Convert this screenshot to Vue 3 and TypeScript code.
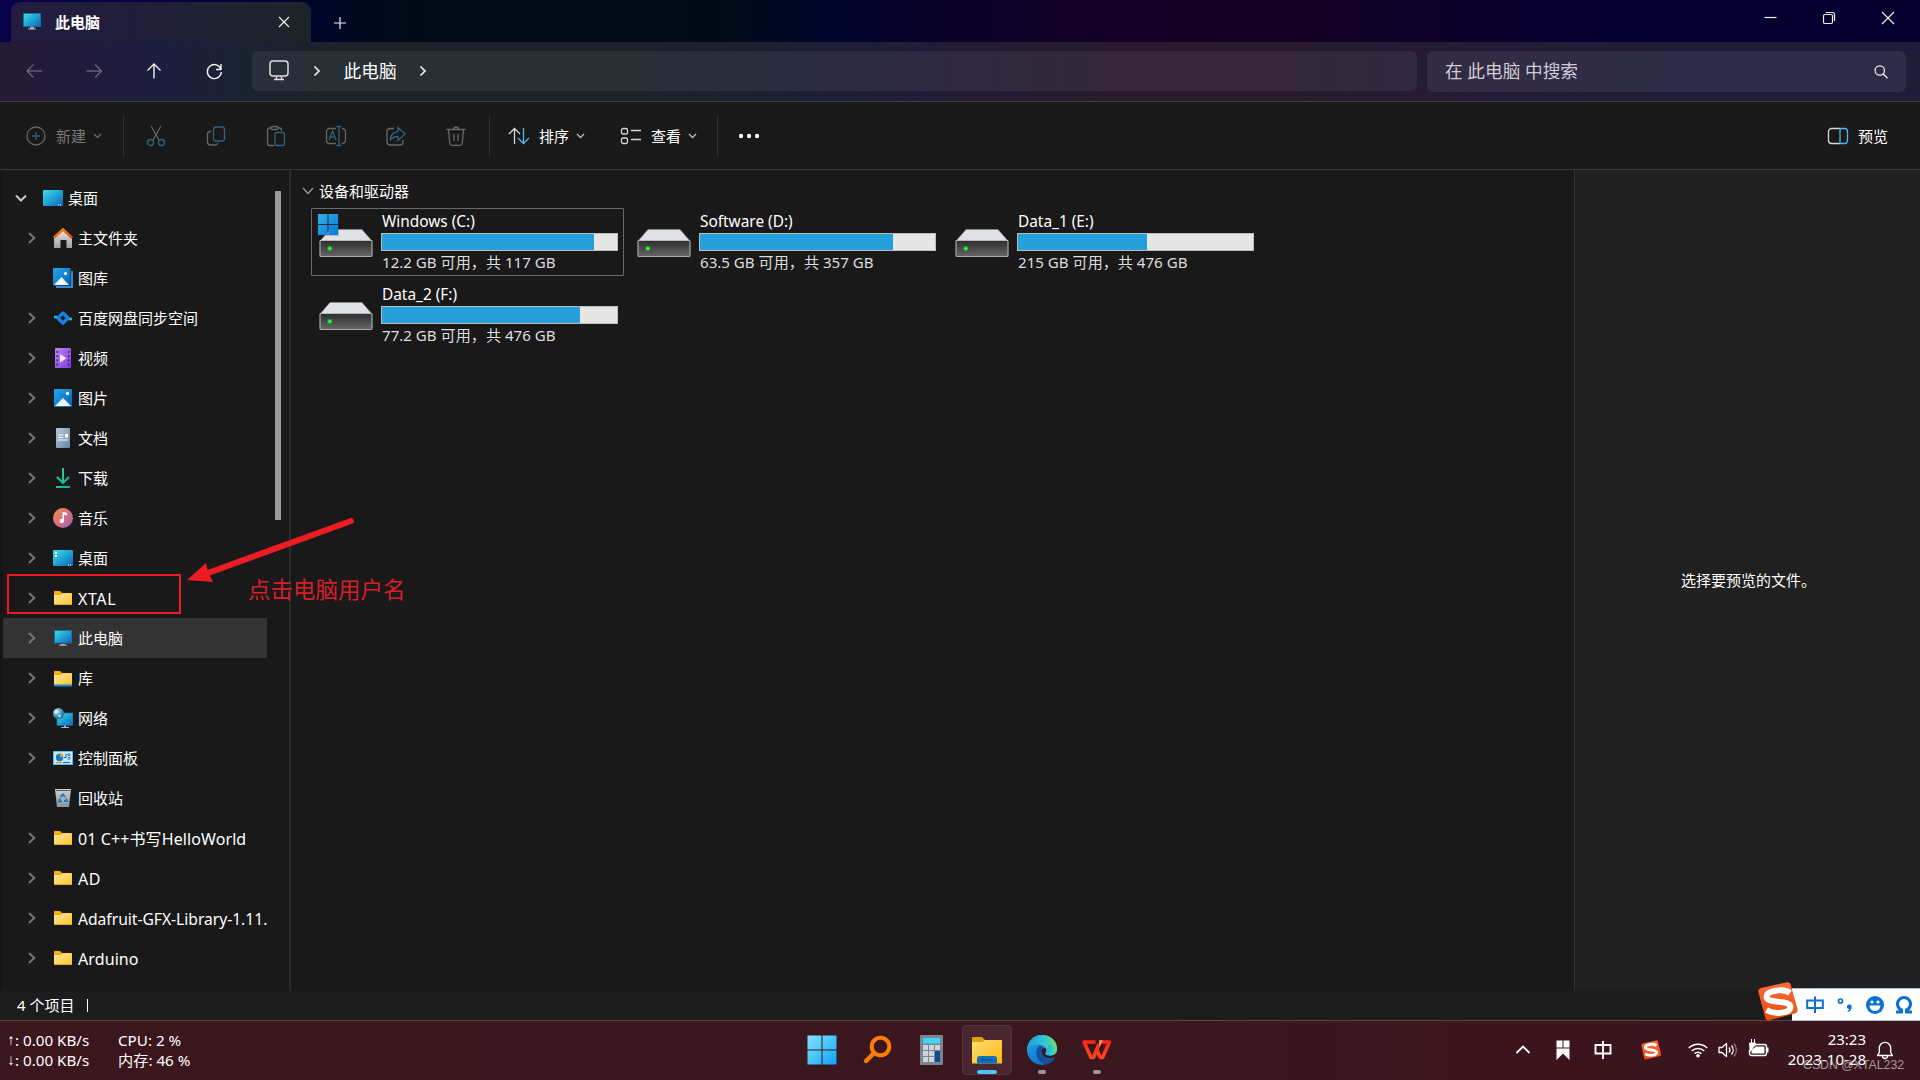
<script setup lang="ts">
type IconKind =
  | 'desktop' | 'home' | 'gallery' | 'baidu' | 'video' | 'picture' | 'document' | 'download'
  | 'music' | 'desktop2' | 'folder' | 'pc' | 'library' | 'network' | 'control' | 'recycle'

interface TreeNode { label: string; icon: IconKind; expandable?: boolean; root?: boolean; selected?: boolean; latin?: 'wide' | 'normal' | 'tight' }
interface Drive { name: string; detail: string; used: number; system?: boolean; focused?: boolean }

const tree: TreeNode[] = [
  { label: '桌面', icon: 'desktop', root: true },
  { label: '主文件夹', icon: 'home', expandable: true },
  { label: '图库', icon: 'gallery' },
  { label: '百度网盘同步空间', icon: 'baidu', expandable: true },
  { label: '视频', icon: 'video', expandable: true },
  { label: '图片', icon: 'picture', expandable: true },
  { label: '文档', icon: 'document', expandable: true },
  { label: '下载', icon: 'download', expandable: true },
  { label: '音乐', icon: 'music', expandable: true },
  { label: '桌面', icon: 'desktop2', expandable: true },
  { label: 'XTAL', icon: 'folder', expandable: true, latin: 'wide' },
  { label: '此电脑', icon: 'pc', expandable: true, selected: true },
  { label: '库', icon: 'library', expandable: true },
  { label: '网络', icon: 'network', expandable: true },
  { label: '控制面板', icon: 'control', expandable: true },
  { label: '回收站', icon: 'recycle' },
  { label: '01 C++书写HelloWorld', icon: 'folder', expandable: true, latin: 'normal' },
  { label: 'AD', icon: 'folder', expandable: true, latin: 'wide' },
  { label: 'Adafruit-GFX-Library-1.11.', icon: 'folder', expandable: true, latin: 'tight' },
  { label: 'Arduino', icon: 'folder', expandable: true, latin: 'normal' },
]

const drives: Drive[] = [
  { name: 'Windows (C:)', detail: '12.2 GB 可用，共 117 GB', used: 90.2, system: true, focused: true },
  { name: 'Software (D:)', detail: '63.5 GB 可用，共 357 GB', used: 82.3 },
  { name: 'Data_1 (E:)', detail: '215 GB 可用，共 476 GB', used: 54.9 },
  { name: 'Data_2 (F:)', detail: '77.2 GB 可用，共 476 GB', used: 84.2 },
]
</script>

<template>
  <div class="screen">
    <svg class="defs" width="0" height="0">
      <defs>
        <linearGradient id="gCyan" x1="0" y1="0" x2="1" y2="1"><stop offset="0" stop-color="#3be0e6" /><stop offset=".5" stop-color="#1fa3d4" /><stop offset="1" stop-color="#0c62bd" /></linearGradient>
        <linearGradient id="gBlue" x1="0" y1="0" x2="1" y2="1"><stop offset="0" stop-color="#25a6ea" /><stop offset="1" stop-color="#0560b4" /></linearGradient>
        <linearGradient id="gFolder" x1="0" y1="0" x2="1" y2="1"><stop offset="0" stop-color="#ffe9a0" /><stop offset="1" stop-color="#fcc42c" /></linearGradient>
        <linearGradient id="gRoof" x1="0" y1="0" x2="1" y2="1"><stop offset="0" stop-color="#f7930e" /><stop offset="1" stop-color="#d9400c" /></linearGradient>
        <linearGradient id="gGrey" x1="0" y1="0" x2="0" y2="1"><stop offset="0" stop-color="#e6e6e6" /><stop offset="1" stop-color="#9e9e9e" /></linearGradient>
        <linearGradient id="gBin" x1="0" y1="0" x2="0" y2="1"><stop offset="0" stop-color="#cdd0d3" /><stop offset="1" stop-color="#8f9397" /></linearGradient>
        <linearGradient id="gPurple" x1="0" y1="0" x2="1" y2="1"><stop offset="0" stop-color="#c384f5" /><stop offset="1" stop-color="#7c3ae0" /></linearGradient>
        <linearGradient id="gDoc" x1="0" y1="0" x2="1" y2="1"><stop offset="0" stop-color="#b5c8dc" /><stop offset="1" stop-color="#6685a4" /></linearGradient>
        <linearGradient id="gGreen" x1="0" y1="0" x2="1" y2="1"><stop offset="0" stop-color="#35cf80" /><stop offset="1" stop-color="#0aa1a4" /></linearGradient>
        <linearGradient id="gMusic" x1="0" y1="0" x2="1" y2="1"><stop offset="0" stop-color="#f28b4e" /><stop offset=".5" stop-color="#d9727b" /><stop offset="1" stop-color="#8e5cc0" /></linearGradient>
        <linearGradient id="gDrive" x1="0" y1="0" x2="0" y2="1"><stop offset="0" stop-color="#2d2d2d" /><stop offset="1" stop-color="#666" /></linearGradient>
        <linearGradient id="gWin" x1="0" y1="0" x2="1" y2="1"><stop offset="0" stop-color="#2fb0ea" /><stop offset="1" stop-color="#067bd6" /></linearGradient>
        <linearGradient id="gStart" x1="0" y1="0" x2="1" y2="1"><stop offset="0" stop-color="#8be0ff" /><stop offset=".5" stop-color="#45c6fb" /><stop offset="1" stop-color="#119dfb" /></linearGradient>
        <linearGradient id="gTaskFolder" x1="0" y1="0" x2="1" y2="1"><stop offset="0" stop-color="#ffdc73" /><stop offset="1" stop-color="#fbb912" /></linearGradient>
        <linearGradient id="gEdgeTop" x1="0" y1=".3" x2="1" y2=".5"><stop offset="0" stop-color="#1b9ee6" /><stop offset=".5" stop-color="#31c2d8" /><stop offset="1" stop-color="#6ae25c" /></linearGradient>
        <linearGradient id="gEdgeLeft" x1="0" y1="0" x2=".7" y2="1"><stop offset="0" stop-color="#2ba6ea" /><stop offset="1" stop-color="#0869c8" /></linearGradient>
        <linearGradient id="gSogou" x1="0" y1="0" x2="0" y2="1"><stop offset="0" stop-color="#fa6b3b" /><stop offset="1" stop-color="#ec4a10" /></linearGradient>
        <linearGradient id="gWps" gradientUnits="userSpaceOnUse" x1="0" y1="5" x2="0" y2="25"><stop offset="0" stop-color="#ff2317" /><stop offset="1" stop-color="#ff4a20" /></linearGradient>
        <radialGradient id="gGlobe" cx=".35" cy=".3" r=".8"><stop offset="0" stop-color="#c5eaf8" /><stop offset=".5" stop-color="#4b9cc6" /><stop offset="1" stop-color="#1b547f" /></radialGradient>
      </defs>
    </svg>

    <header class="titlebar">
      <div class="tab">
        <svg class="tab-icon" width="20" height="20" viewBox="0 0 20 20"><rect x="2.500" y="1.500" width="17" height="13" fill="url(#gCyan)" stroke="#1c6f97" /><path d="M9 15h4v1.500H9zM7 16.500h8v1H7z" fill="#aab4b9" /></svg>
        <span class="tab-title">此电脑</span>
        <svg class="tab-close" width="12" height="12" viewBox="0 0 12 12"><path d="M1 1l10 10M11 1L1 11" /></svg>
      </div>
      <svg class="tab-add" width="14" height="14" viewBox="0 0 14 14"><path d="M7 1v12M1 7h12" /></svg>
      <div class="window-buttons">
        <svg width="14" height="14" viewBox="0 0 14 14"><path d="M1.500 6.500h12" /></svg>
        <svg width="14" height="14" viewBox="0 0 14 14"><rect x="1.500" y="3.500" width="9" height="9" rx="1.500" /><path d="M4 1.500h6.500a2 2 0 0 1 2 2V10" /></svg>
        <svg width="14" height="14" viewBox="0 0 14 14"><path d="M1 1l12 12M13 1L1 13" /></svg>
      </div>
    </header>

    <nav class="navbar">
      <svg class="nav-btn dim" width="20" height="20" viewBox="0 0 20 20"><path d="M18 10H3M9.500 3.500L3 10l6.500 6.500" /></svg>
      <svg class="nav-btn dim" width="20" height="20" viewBox="0 0 20 20"><path d="M2.500 10h15M11 3.500L17.500 10 11 16.500" /></svg>
      <svg class="nav-btn" width="20" height="20" viewBox="0 0 20 20"><path d="M10 17.500V3M3.500 9.500L10 3l6.500 6.500" /></svg>
      <svg class="nav-btn" width="20" height="20" viewBox="0 0 20 20"><path d="M17 8.500A7 7 0 1 0 17.300 11M17 3v5.500h-5" /></svg>
      <div class="address">
        <svg class="monitor" width="22" height="22" viewBox="0 0 22 22"><rect x="2" y="1" width="18" height="15" rx="3" /><path d="M8.500 16.500v3M13.500 16.500v3M6 19.500h10" /></svg>
        <svg class="crumb" width="8" height="12" viewBox="0 0 8 12"><path d="M1.500 1.500L6 6l-4.500 4.500" /></svg>
        <span class="crumb-text">此电脑</span>
        <svg class="crumb last" width="8" height="12" viewBox="0 0 8 12"><path d="M1.500 1.500L6 6l-4.500 4.500" /></svg>
      </div>
      <div class="search">
        <span>在 此电脑 中搜索</span>
        <svg width="16" height="16" viewBox="0 0 16 16"><circle cx="6.800" cy="6.500" r="4.700" /><path d="M10.200 10l4.300 4.300" /></svg>
      </div>
    </nav>

    <div class="toolbar">
      <div class="tool new">
        <svg width="20" height="20" viewBox="0 0 20 20"><circle cx="10" cy="10" r="9" /><path class="accent" d="M10 6v8M6 10h8" /></svg>
        <span>新建</span>
        <svg class="caret" width="9" height="6" viewBox="0 0 9 6"><path d="M1 1l3.500 3.500L8 1" /></svg>
      </div>
      <i class="sep"></i>
      <div class="icon-tools">
        <svg width="22" height="22" viewBox="0 0 22 22"><path d="M6 1l8 14M16 1L8 15" /><circle class="accent" cx="5.500" cy="17.500" r="3" /><circle class="accent" cx="16.500" cy="17.500" r="3" /></svg>
        <svg width="22" height="22" viewBox="0 0 22 22"><path d="M6 6.500H5A2.500 2.500 0 0 0 2.500 9v8A3 3 0 0 0 5.500 20H10a3 3 0 0 0 3-2" /><rect class="accent" x="8.500" y="2" width="11" height="14" rx="2.500" /></svg>
        <svg width="22" height="22" viewBox="0 0 22 22"><path d="M6 3H4.500A2 2 0 0 0 2.500 5v13.500a2 2 0 0 0 2 2H9M13 3h1.500a2 2 0 0 1 2 2v1" /><rect x="6" y="1.500" width="7" height="3" rx="1.500" /><rect class="accent" x="10" y="7.500" width="9.500" height="13" rx="2" /></svg>
        <svg width="22" height="22" viewBox="0 0 22 22"><path d="M11 3.500H4.500a3 3 0 0 0-3 3v9a3 3 0 0 0 3 3H11M17 3.500a3.500 3.500 0 0 1 3.500 3.500v8a3.500 3.500 0 0 1-3.500 3.500" /><path class="accent" d="M4 15l3.500-9L11 15M5.200 12h4.600M14 1.500v19M11.500 1.500h5M11.500 20.500h5" /></svg>
        <svg width="22" height="22" viewBox="0 0 22 22"><path d="M9 3.500H5a3 3 0 0 0-3 3V17a3 3 0 0 0 3 3h10a3 3 0 0 0 3-3v-2" /><path class="accent" d="M13 2.500l7 6.500-7 6.500v-4c-4 0-6 1-8 4 .5-5 3-8.500 8-9z" /></svg>
        <svg width="22" height="22" viewBox="0 0 22 22"><path d="M1.500 4.500h19M8.500 4.500a2.500 2.500 0 0 1 5 0M3.500 4.500l1.300 14a2 2 0 0 0 2 1.800h8.400a2 2 0 0 0 2-1.800l1.300-14M9 9v7M13 9v7" /></svg>
      </div>
      <i class="sep mid"></i>
      <div class="tool sort">
        <svg width="22" height="18" viewBox="0 0 22 18"><path d="M6.500 17V1.500M1 7l5.500-5.500L12 7" /><path class="accent" d="M15.500 1v15.500M10 11l5.500 5.500L21 11" /></svg>
        <span>排序</span>
        <svg class="caret" width="9" height="6" viewBox="0 0 9 6"><path d="M1 1l3.500 3.500L8 1" /></svg>
      </div>
      <div class="tool view">
        <svg width="22" height="18" viewBox="0 0 22 18"><rect x="1.500" y="1.500" width="6" height="5.500" rx="1.500" /><rect x="1.500" y="11" width="6" height="5.500" rx="1.500" /><path d="M11 3.500h10M11 12.500h10" /></svg>
        <span>查看</span>
        <svg class="caret" width="9" height="6" viewBox="0 0 9 6"><path d="M1 1l3.500 3.500L8 1" /></svg>
      </div>
      <i class="sep end"></i>
      <svg class="more" width="22" height="6" viewBox="0 0 22 6"><circle cx="3" cy="3" r="2.200" /><circle cx="11" cy="3" r="2.200" /><circle cx="19" cy="3" r="2.200" /></svg>
      <div class="tool preview-toggle">
        <svg width="22" height="18" viewBox="0 0 22 18"><path d="M13 1.500H4.500a3 3 0 0 0-3 3v9a3 3 0 0 0 3 3H13" /><path class="accent" d="M13 1.500h4.500a3 3 0 0 1 3 3v9a3 3 0 0 1-3 3H13z" /></svg>
        <span>预览</span>
      </div>
    </div>

    <div class="body">
      <aside class="sidebar">
        <div class="tree">
          <div v-for="(node, i) in tree" :key="i" class="row" :class="{ root: node.root, selected: node.selected }">
            <svg v-if="node.root" class="chev open" width="12" height="8" viewBox="0 0 12 8"><path d="M1 1.500l5 5 5-5" /></svg>
            <svg v-else class="chev" :class="{ none: !node.expandable }" width="8" height="12" viewBox="0 0 8 12"><path d="M1 1l5.300 5L1 11" /></svg>
            <svg class="icon" width="20" height="20" viewBox="0 0 20 20">
              <template v-if="node.icon === 'desktop' || node.icon === 'desktop2'">
                <rect y="2" width="20" height="16" rx="1" fill="url(#gCyan)" />
                <path d="M15 17h1M17 17h1" stroke="#fff" />
                <path v-if="node.icon === 'desktop2'" d="M2 4h2v2H2zM2 7h2v2H2z" fill="#fff" />
              </template>
              <template v-else-if="node.icon === 'home'">
                <path d="M1 9l9-7 9 7v11h-5.500v-8h-6v8H1z" fill="url(#gGrey)" />
                <path d="M.8 9.800L10 1.500l9.200 8.300" fill="none" stroke="url(#gRoof)" stroke-width="2.600" />
              </template>
              <template v-else-if="node.icon === 'gallery'">
                <path d="M18 3h2v17H3v-2h15z" fill="#3b88d0" />
                <rect width="17.500" height="17.500" rx="1" fill="url(#gBlue)" />
                <path d="M1 17l7.500-8 7.500 8z" fill="#eef5fc" /><circle cx="12.500" cy="5.500" r="1.600" fill="#fff" />
              </template>
              <template v-else-if="node.icon === 'baidu'">
                <path d="M1 9h2.500L8 13.500" fill="none" stroke="#25c6cf" stroke-width="2.600" />
                <path d="M19 11h-3L12 6.500" fill="none" stroke="#25bdd8" stroke-width="2.600" />
                <path d="M10 5L15 10l-5 5-5-5z" fill="none" stroke="#167ff0" stroke-width="3.200" stroke-linejoin="round" />
              </template>
              <template v-else-if="node.icon === 'video'">
                <rect x="2" width="16" height="20" rx="1" fill="url(#gPurple)" />
                <path d="M4.300 3v15M15.700 3v15" stroke="#3b2c60" stroke-width="1.800" stroke-dasharray="1.800 2.400" />
                <path d="M7 6l6.500 4.200L7 14.500z" fill="#f4eefa" />
              </template>
              <template v-else-if="node.icon === 'picture'">
                <rect x="1" y="1" width="18" height="18" rx="1" fill="url(#gBlue)" />
                <path d="M2 18l8-8 8 8z" fill="#eef5fc" /><circle cx="14.500" cy="5.500" r="1.700" fill="#fff" />
              </template>
              <template v-else-if="node.icon === 'document'">
                <rect x="3" width="14" height="20" rx="1" fill="url(#gDoc)" />
                <path d="M5 7h5.500M5 9.500h5.500M5 12h10" stroke="#fff" stroke-width="1.100" /><path d="M12 6h3v3.500h-3z" fill="#fff" />
              </template>
              <template v-else-if="node.icon === 'download'">
                <path d="M4 9l6 6 6-6" fill="none" stroke="url(#gGreen)" stroke-width="2.100" /><path d="M3 18h14v2H3z" fill="url(#gGreen)" /><path d="M9 0h2v14.500H9z" fill="#2cc28a" />
              </template>
              <template v-else-if="node.icon === 'music'">
                <circle cx="10" cy="10" r="10" fill="url(#gMusic)" />
                <circle cx="8.800" cy="13" r="2.200" fill="#fff" /><path d="M9.500 13V4h1.500l3 1v2.500l-3-.8V13z" fill="#fff" />
              </template>
              <template v-else-if="node.icon === 'pc'">
                <rect x="1.500" y="2.500" width="17" height="12.500" fill="url(#gCyan)" stroke="#1b6f98" /><path d="M8 16h4v1H8zM6 16.800h8v1H6z" fill="#aab4b9" />
              </template>
              <template v-else-if="node.icon === 'network'">
                <rect x="4" y="5" width="16" height="12.500" fill="url(#gCyan)" stroke="#1770a0" stroke-width=".6" /><path d="M11 17.500h2v1.500h3v1H8v-1h3z" fill="#aab4b9" />
                <circle cx="5.500" cy="5.500" r="5.500" fill="url(#gGlobe)" /><path d="M1 4l3-2 1 2-2 2zM5 7l3 0-1 3z" fill="#dff2fa" />
              </template>
              <template v-else-if="node.icon === 'control'">
                <rect y="3" width="20" height="14" rx=".5" fill="#54bff0" /><rect x="1" y="4" width="18" height="12" fill="#c4e9fb" />
                <circle cx="6.500" cy="9.500" r="3.700" fill="#0d7ed8" /><path d="M7 9V5a4 4 0 0 1 3.500 4z" fill="#f59a23" />
                <path d="M11 9.500h2V6.500h1.500" stroke="#1566a8" fill="none" /><circle cx="16" cy="6.800" r="1.100" fill="none" stroke="#1566a8" stroke-width=".8" /><circle cx="16" cy="10.300" r="1.100" fill="none" stroke="#1566a8" stroke-width=".8" /><path d="M3 14.500h6" stroke="#f28a12" stroke-width="1.200" /><path d="M10 14.500h7" stroke="#0d6fc4" stroke-width="1.200" />
              </template>
              <template v-else-if="node.icon === 'recycle'">
                <path d="M2 1h16l-2 18H4z" fill="url(#gBin)" /><path d="M3 2h14v1H3z" fill="#5d5f61" />
                <path d="M7.500 9l2.500-2.500L12 9M13 10.500l1 2.500h-3M9 13.500H6l1.200-3" fill="none" stroke="#147ed0" stroke-width="1.900" />
              </template>
              <template v-else>
                <path d="M1 3.500a.6.600 0 0 1 .6-.6H7l2 2H18v3H1z" fill="#f5b00e" />
                <path d="M1 7h7l2-1.800h9V17H1z" fill="url(#gFolder)" />
                <path v-if="node.icon === 'folder'" d="M1 16.500h18" stroke="#e2a52a" /><path v-else d="M1 17.500h18" stroke="#1187d8" stroke-width="2" />
              </template>
            </svg>
            <span class="label" :class="node.latin">{{ node.label }}</span>
          </div>
        </div>
        <div class="scroll-thumb"></div>
      </aside>

      <main class="content">
        <div class="group-head">
          <svg width="12" height="8" viewBox="0 0 12 8"><path d="M1 1l5 5.500L11 1" /></svg>
          <span>设备和驱动器</span>
        </div>
        <div class="drives">
          <div v-for="d in drives" :key="d.name" class="drive" :class="{ focused: d.focused }">
            <svg class="drive-icon" width="58" height="48" viewBox="0 0 58 48">
              <path d="M13 15.500h32l10 11.500H3z" fill="#e0e1e5" stroke="#8d8d8d" stroke-width=".6" />
              <rect x="3" y="26.500" width="52" height="16" rx="1" fill="url(#gDrive)" stroke="#a8a8a8" stroke-width="1.200" />
              <path d="M3 26.500h52" stroke="#b8b8b8" /><circle cx="12.800" cy="34.500" r="2.500" fill="#12b824" /><circle cx="12.800" cy="34.500" r="1.300" fill="#65f45b" />
              <g v-if="d.system"><path d="M.5 0h21v21.500H.5z" fill="#2a4660" opacity=".5" /><path d="M1 0h9.500v10H1zM11.500 0H21v10h-9.500zM1 11h9.500v10H1zM11.500 11H21v10h-9.500z" fill="url(#gWin)" /></g>
            </svg>
            <div class="drive-info">
              <span class="drive-name">{{ d.name }}</span>
              <div class="meter"><div class="meter-fill" :style="{ width: d.used + '%' }"></div></div>
              <span class="drive-detail">{{ d.detail }}</span>
            </div>
          </div>
        </div>
      </main>

      <section class="preview"><span>选择要预览的文件。</span></section>
    </div>

    <div class="status"><span>4 个项目</span><i></i></div>

    <footer class="taskbar">
      <div class="monitoring">
        <div class="net"><span><b>↑</b>: 0.00 KB/s</span><span><b>↓</b>: 0.00 KB/s</span></div>
        <div class="sys"><span>CPU: 2 %</span><span>内存: 46 %</span></div>
      </div>
      <div class="apps">
        <div class="app"><svg width="30" height="30" viewBox="0 0 30 30"><path d="M.5.500h14v14H.5zM15.500.500h14v14h-14zM.5 15.500h14v14H.5zM15.500 15.500h14v14h-14z" fill="url(#gStart)" /></svg></div>
        <div class="app"><svg width="30" height="30" viewBox="0 0 30 30"><circle cx="18.500" cy="11.500" r="8.800" fill="none" stroke="#fb7c06" stroke-width="4" /><path d="M12 18l-8 8" stroke="#fb7c06" stroke-width="4.500" stroke-linecap="round" /></svg></div>
        <div class="app"><svg width="30" height="30" viewBox="0 0 30 30"><rect x="3" width="23" height="30" rx="1" fill="#7b8490" /><rect x="6" y="3" width="17" height="5.500" fill="#3fd6f6" /><path d="M6 10h5v5H6zM12 10h5v5h-5zM18 10h5v5h-5zM6 16h5v5H6zM12 16h5v5h-5zM6 22h5v5H6zM12 22h5v5h-5z" fill="#ccd3da" /><path d="M18 16h5v11h-5z" fill="#124a8c" /></svg></div>
        <div class="app active"><svg width="30" height="30" viewBox="0 0 30 30"><path d="M0 3a1 1 0 0 1 1-1h9l3 3v5H0z" fill="#e0a008" /><path d="M0 7h10l3-2h17v23.500H0z" fill="url(#gTaskFolder)" /><path d="M5 28.500V24a3 3 0 0 1 3-3h14a3 3 0 0 1 3 3v4.500z" fill="#0f70bd" /><path d="M9 25h12" stroke="#0a4d88" /></svg><i></i></div>
        <div class="app running"><svg width="30" height="30" viewBox="0 0 30 30">
          <circle cx="15" cy="15" r="15" fill="url(#gEdgeLeft)" />
          <path d="M.5 12C2 4 8 0 15 0c9 0 15 6 15 13 0 5-3.500 7.500-7.500 7.500-3 0-4.500-1.200-4-2.500 2-3 .5-8-6-8.500C6 9 1.500 11 .5 16z" fill="url(#gEdgeTop)" />
          <path d="M12 11c-5 5-3 16 7 18.400 4-.8 7.300-3.400 9-6.900-7 3.500-13 0-13.500-5 0-2 1-3.500 2-4.500-1-1.500-3-2.500-4.500-2z" fill="#11529e" />
          <path d="M14.500 16c-.5 6 6.500 9 14 6l1.500 1V18c-2 2-4.500 2.500-7.500 2.500-3 0-4.500-1.200-4-2.500 1-1.500 1-3.500 0-5-2-.5-3.700.8-4 3z" fill="#3a171f" />
          <path d="M18.500 18c-.5 1.300 1 2.500 4 2.500 4 0 7.500-2.500 7.500-7.500L22 9z" fill="url(#gEdgeTop)" />
        </svg><i></i></div>
        <div class="app running"><svg width="30" height="30" viewBox="0 0 30 30"><path d="M13.500 7H2l7 15.500h2.500L17 9" fill="none" stroke="url(#gWps)" stroke-width="3.600" stroke-linejoin="round" /><path d="M14 13.500l4.500 9h2L27.500 7H20" fill="none" stroke="url(#gWps)" stroke-width="3.600" stroke-linejoin="round" /><path d="M17 5.200h4l-3.500 7z" fill="#ff9a55" /></svg><i></i></div>
      </div>
      <div class="tray">
        <svg class="t-up" width="16" height="10" viewBox="0 0 16 10"><path d="M1.500 8L8 1.500 14.500 8" fill="none" stroke="#fff" stroke-width="1.800" /></svg>
        <svg class="t-flag" width="14" height="20" viewBox="0 0 14 20"><path d="M.5.500h6v7h-6zM7.500.500h6v7h-6zM.5 8.500h13V20L7 13.500.5 20z" fill="#fff" /></svg>
        <svg class="t-ime" width="18" height="20" viewBox="0 0 18 20"><path d="M1.500 5h15v8.500h-15zM9 1v18" fill="none" stroke="#fff" stroke-width="1.900" /></svg>
        <svg class="t-sogou" width="20" height="20" viewBox="0 0 40 40"><path d="M4 7L31 1q2-.4 2.500 1.500L40 28q.5 3-2 4L10 39q-3 .5-3.500-2L1 11q0-3 3-4z" fill="url(#gSogou)" /><path d="M31 11C24 7 9 8 9 15c0 7 22 3 22 10 0 6-15 7-23 3" fill="none" stroke="#fff" stroke-width="6" /></svg>
        <svg class="t-wifi" width="20" height="16" viewBox="0 0 20 16"><g fill="none" stroke="#fff" stroke-width="1.500"><path d="M.8 6a13 13 0 0 1 18.400 0M3.700 9a9 9 0 0 1 12.600 0M6.500 11.800a5 5 0 0 1 7 0" /></g><circle cx="10" cy="13.800" r="1.800" fill="#fff" /></svg>
        <svg class="t-vol" width="20" height="16" viewBox="0 0 20 16"><g fill="none" stroke="#fff" stroke-width="1.300"><path d="M1 5.500h3L8.500 1.500v13L4 10.500H1z" stroke-linejoin="round" /><path d="M11 5.500a4 4 0 0 1 0 5M13.500 3.500a7 7 0 0 1 0 9" /><path d="M16 1.500a10 10 0 0 1 0 13" stroke="#8d7377" /></g></svg>
        <svg class="t-bat" width="21" height="18" viewBox="0 0 21 18"><path d="M7 5.500h9.500a2 2 0 0 1 2 2v7a2 2 0 0 1-2 2H3.500a2 2 0 0 1-2-2V11" fill="none" stroke="#fff" stroke-width="1.400" /><path d="M19 8.500h1.500v5H19z" fill="#fff" /><path d="M8 7.500h8.500v7h-13V11z" fill="#fff" /><path d="M3.500 0v4M6.500 0v4M1.500 4h6v2L5 8.500l-3 4V9z" stroke="#fff" fill="#fff" /></svg>
        <div class="clock"><span>23:23</span><span>2023-10-28</span></div>
        <svg class="t-bell" width="18" height="20" viewBox="0 0 18 20"><path d="M1.500 15.500l1.800-3V8a5.700 5.700 0 0 1 11.400 0v4.500l1.800 3zM6.500 16a2.500 2.500 0 0 0 5 0" fill="none" stroke="#fff" stroke-width="1.300" stroke-linejoin="round" /></svg>
      </div>
    </footer>

    <div class="ime-bar">
      <svg class="ime-logo" width="40" height="39" viewBox="0 0 40 39"><path d="M3 6L29 .300q3-.5 3.600 2L39.500 27q.8 3.500-2.500 4.500L11 38.300q-3 .5-3.600-2L.3 10q-.5-3 2.700-4z" fill="url(#gSogou)" /><path d="M32 11C26 6.500 8 8 8.500 15c.5 7 24 2.500 24 10 0 6-15 8-24 3" fill="none" stroke="#fff" stroke-width="6" /></svg>
      <svg class="ime-zh" width="18" height="18" viewBox="0 0 18 18"><path d="M1.200 4.500h15.600v7.500H1.200zM9 .500v16.500" fill="none" stroke="#0a70d8" stroke-width="2" /></svg>
      <svg class="ime-punct" width="16" height="18" viewBox="0 0 16 18"><circle cx="3.500" cy="5" r="2" fill="none" stroke="#0a70d8" stroke-width="1.700" /><path d="M10 11a2.300 2.300 0 1 1 4.500.500c0 2-1.500 4-3.500 4.500l-.5-1c1-.5 1.500-1.500 1.500-2-1 0-2-1-2-2z" fill="#0a70d8" /></svg>
      <svg class="ime-smile" width="18" height="18" viewBox="0 0 18 18"><circle cx="9" cy="9" r="9" fill="#0a70d8" /><circle cx="6" cy="6" r="1.600" fill="#fff" /><circle cx="12" cy="6" r="1.600" fill="#fff" /><path d="M3.500 9.500h11a5.500 5.500 0 0 1-11 0z" fill="#fff" /></svg>
      <svg class="ime-omega" width="18" height="18" viewBox="0 0 18 18"><path d="M1 16h5.500v-2a6.500 6.500 0 1 1 5 0v2H17" fill="none" stroke="#0a70d8" stroke-width="3" /></svg>
    </div>

    <div class="highlight-box"></div>
    <svg class="arrow" width="180" height="72" viewBox="0 0 180 72"><path d="M24 58L167 6" stroke="#ed1c24" stroke-width="6" stroke-linecap="round" /><path d="M3 65L22 48l2 9 5 10z" fill="#ed1c24" /></svg>
    <span class="note">点击电脑用户名</span>
    <span class="watermark">CSDN @XTAL232</span>
  </div>
</template>

<style>
body { margin: 0; background: #191919; overflow: hidden; }
</style>

<style scoped>
.screen {
  position: relative; display: flex; flex-direction: column; width: 1920px; height: 1080px; overflow: hidden;
  font-family: "Noto Sans", "Noto Sans CJK SC", sans-serif; font-size: 15px; line-height: 20px; color: #fff; background: #191919; white-space: nowrap;
}
.defs { position: absolute; }
svg { display: block; flex: none; }

.titlebar {
  display: flex; height: 42px; flex: none;
  background: linear-gradient(90deg, #08004a 0, #060048 120px, #00052e 300px, #000a1a 380px, #000c12 480px, #000c12 620px, #000a1a 750px, #00052c 835px, #0a0028 950px, #110026 1060px, #140022 1280px, #0d0028 1420px, #050032 1620px, #04002e 1920px);
}
.tab { display: flex; align-items: center; width: 300px; height: 40px; margin: 2px 0 0 11px; border-radius: 9px 9px 0 0; background: linear-gradient(90deg, #231c40, #1f1e3a 40%, #1d2230 70%, #1c242a); }
.tab-icon { margin-left: 10px; }
.tab-title { margin-left: 14px; font-weight: 700; }
.tab-close { margin-left: 178px; }
.tab-close path, .tab-add path, .window-buttons svg { fill: none; stroke: #eee; stroke-width: 1.200; }
.tab-add { margin: 16px 0 0 22px; }
.window-buttons { display: flex; gap: 45px; margin: 11px 25px 0 auto; }

.navbar {
  display: flex; align-items: flex-start; height: 59px; flex: none; border-bottom: 1px solid #3c3c3e;
  background: linear-gradient(90deg, #241a36 0, #201c3c 100px, #1c1e3e 160px, #1a2232 240px, #1b2229 320px, #1b2229 640px, #1b2030 760px, #1d1d38 860px, #231b32 980px, #271a2d 1100px, #271a2d 1300px, #241b34 1450px, #1f1c38 1650px, #1f1c38 1920px);
}
.nav-btn { margin: 19px 0 0 40px; fill: none; stroke: #f2f2f2; stroke-width: 1.400; }
.nav-btn:first-child { margin-left: 24px; }
.nav-btn.dim { stroke: #66627a; }
.address { display: flex; align-items: center; box-sizing: border-box; width: 1165px; height: 40px; margin: 9px 0 0 28px; padding-left: 16px; border-radius: 6px; background: rgba(255, 255, 255, .06); font-size: 17.7px; }
.monitor { fill: none; stroke: #ddd; stroke-width: 1.500; }
.crumb { margin-left: 23px; fill: none; stroke: #eee; stroke-width: 1.700; }
.crumb.last { margin-left: 22px; }
.crumb-text { margin-left: 22.500px; }
.search { display: flex; align-items: center; justify-content: space-between; box-sizing: border-box; width: 479px; height: 41px; margin: 9px 0 0 10px; padding: 0 17px 0 18px; border-radius: 6px; background: rgba(255, 255, 255, .07); font-size: 17.7px; color: #cfccd6; }
.search span { margin-top: -2px; }
.search svg { fill: none; stroke: #eee; stroke-width: 1.300; }

.toolbar { display: flex; align-items: center; height: 67px; flex: none; border-bottom: 1px solid #3a3a3a; background: #191919; }
.tool { display: flex; align-items: center; }
.tool > span { margin: 0 7px 0 10px; }
.toolbar svg { fill: none; stroke: #d8d8d8; stroke-width: 1.300; }
.toolbar .accent { stroke: #4cb8f0; }
.toolbar .caret { stroke: #bbb; }
.tool.new { margin-left: 26px; color: #777; }
.toolbar .new svg, .toolbar .new .caret, .toolbar .icon-tools svg { stroke: #666; }
.toolbar .new .accent, .toolbar .icon-tools .accent { stroke: #2b6280; }
.sep { width: 1px; height: 40px; background: #303030; flex: none; margin-left: 21px; }
.sep.mid { margin-left: 22px; }
.sep.end { margin-left: 20px; }
.icon-tools { display: flex; gap: 38px; margin-left: 21px; }
.tool.sort { margin-left: 18px; }
.tool.sort > span, .tool.view > span { margin-left: 9px; }
.tool.view { margin-left: 35px; }
.toolbar .more { margin-left: 20px; fill: #fff; stroke: none; }
.preview-toggle { margin: 0 25px 0 auto; }
.preview-toggle > span { margin-left: 9px; }

.body { display: flex; height: 821px; flex: none; }
.sidebar { display: flex; box-sizing: border-box; width: 291px; border-left: 3px solid #151515; border-right: 2px solid #2b2b2b; }
.tree { width: 264px; padding-top: 8px; overflow: hidden; }
.row { display: flex; align-items: center; height: 40px; padding-left: 25px; overflow: hidden; }
.row.root { padding-left: 12px; }
.row.selected { background: #333; }
.chev { width: 8px; margin-right: 17px; fill: none; stroke: #777; stroke-width: 2; }
.chev.open { width: 12px; margin-right: 16px; stroke: #c8c8c8; }
.chev.none { visibility: hidden; }
.label { margin-left: 5px; }
.label.wide, .label.normal, .label.tight { margin-top: 1px; }
.label.wide { font-size: 16px; letter-spacing: .6px; }
.label.normal { font-size: 16px; letter-spacing: .1px; }
.label.tight { font-size: 15.7px; letter-spacing: -.04px; }
.scroll-thumb { width: 6px; height: 329px; margin: 21px 0 0 8px; background: #999; }

.content { width: 1283px; }
.group-head { display: flex; align-items: center; gap: 5px; height: 20px; margin: 11px 0 0 11px; }
.group-head svg { fill: none; stroke: #999; stroke-width: 1.300; }
.drives { display: grid; grid-template-columns: repeat(3, 318px); grid-auto-rows: 73px; margin: 7px 0 0 20px; }
.drive { display: flex; box-sizing: border-box; width: 313px; height: 68px; border: 1px solid transparent; border-radius: 1px; }
.drive.focused { border-color: #696969; }
.drive-icon { margin: 5px 0 0 5px; }
.drive-info { display: flex; flex-direction: column; width: 237px; margin: 3px 0 0 6px; }
.drive-name { padding-left: 1px; height: 21px; font-size: 15.4px; }
.meter { box-sizing: border-box; height: 18px; border: 1px solid #bcbcbc; background: #e6e6e6; }
.meter-fill { height: 100%; background: #26a0da; }
.drive-detail { margin-top: 1px; padding-left: 1px; font-size: 15.1px; color: #dedede; }
.preview { display: flex; box-sizing: border-box; width: 346px; padding: 400px 0 0 106px; border-left: 1px solid #2f2f2f; background: #202020; }

.status { display: flex; align-items: center; height: 29px; flex: none; padding-left: 17px; background: #1c1c1c; }
.status span { margin-top: -2px; }
.status i { width: 1px; height: 13px; margin-left: 13px; background: #fff; }

.taskbar { display: flex; box-sizing: border-box; height: 60px; border-top: 1px solid #604349; background: linear-gradient(90deg, #3b161d, #3a171e 50%, #3c141c 80%, #38161c); }
.monitoring { display: flex; width: 781px; padding: 9px 0 0 7px; box-sizing: border-box; }
.net, .sys { display: flex; flex-direction: column; }
.net { width: 111px; font-size: 15.2px; }
.net span { display: flex; white-space: pre; }
.net b { display: flex; justify-content: center; width: 8px; font-weight: 400; font-family: "Liberation Sans", sans-serif; }
.sys { font-size: 15.200px; }
.apps { display: flex; gap: 5px; margin-left: 16px; padding-top: 4px; }
.app { display: flex; flex-direction: column; align-items: center; box-sizing: border-box; width: 50px; height: 50px; padding-top: 10px; }
.app.active { background: #4a272e; border-radius: 5px; box-shadow: inset 0 0 0 1px #53323a; }
.app i { width: 8px; height: 4px; margin-top: 5px; border-radius: 2px; background: #a29297; }
.app.active i { width: 20px; background: #4cc2ff; }
.tray { display: flex; align-items: flex-start; margin-left: auto; }
.t-up { margin: 24px 25px 0 0; }
.t-flag { margin: 19px 24px 0 0; }
.t-ime { margin: 19px 29px 0 0; }
.t-sogou { margin: 19px 27px 0 0; }
.t-wifi { margin: 21px 10px 0 0; }
.t-vol { margin: 21px 10px 0 0; }
.t-bat { margin: 18px 0 0; }
.clock { display: flex; flex-direction: column; align-items: flex-end; width: 97px; margin-top: 8px; }
.t-bell { margin: 19px 26px 0 10px; }

.ime-bar { position: absolute; left: 1792px; top: 988px; display: flex; align-items: center; box-sizing: border-box; width: 128px; height: 33px; padding-left: 14px; border-top: 1px solid #aabbd5; border-bottom: 1px solid #aabbd5; background: #fff; }
.ime-logo { position: absolute; left: -34px; top: -7px; }
.ime-punct { margin-left: 13px; }
.ime-smile { margin-left: 13px; }
.ime-omega { margin-left: 11px; }

.highlight-box { position: absolute; left: 7px; top: 574px; box-sizing: border-box; width: 174px; height: 40px; border: 2px solid #ed1c24; }
.arrow { position: absolute; left: 184px; top: 515px; }
.note { position: absolute; left: 248px; top: 575px; font-size: 22.500px; line-height: 30px; color: #d81e28; }
.watermark { position: absolute; left: 1803px; top: 1055px; font-size: 12.300px; color: rgba(205, 195, 198, .75); font-family: "Liberation Sans", sans-serif; }
</style>
